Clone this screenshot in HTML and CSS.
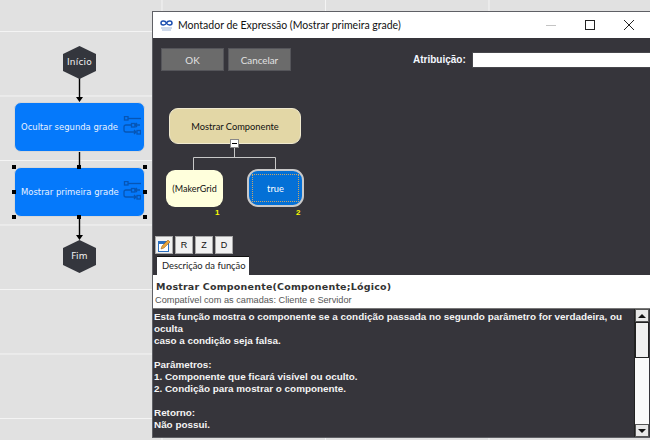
FILE: index.html
```html
<!DOCTYPE html>
<html lang="pt">
<head>
<meta charset="utf-8">
<title>Montador de Expressão</title>
<link rel="stylesheet" href="styles.css">
</head>
<body>
<main class="canvas">
  <svg class="links" width="152" height="440" viewBox="0 0 152 440">
    <path d="M79.500 78V100M79.500 152V166M79.500 216V238" stroke="#000" stroke-width="1.400" fill="none"/>
    <path d="M76 97h7l-3.500 5zM76 235h7l-3.500 5z" fill="#000"/>
  </svg>
  <div class="hex hex-start">Início</div>
  <div class="task task-hide">Ocultar segunda grade
    <svg class="task-icon" width="18" height="22" viewBox="0 0 18 22"><use href="#flow"/></svg>
  </div>
  <div class="task task-show">Mostrar primeira grade
    <svg class="task-icon" width="18" height="22" viewBox="0 0 18 22"><use href="#flow"/></svg>
    <i class="grip g1"></i><i class="grip g2"></i><i class="grip g3"></i><i class="grip g4"></i><i class="grip g5"></i><i class="grip g6"></i><i class="grip g7"></i><i class="grip g8"></i>
  </div>
  <div class="hex hex-end">Fim</div>
  <svg width="0" height="0" class="defs"><defs>
    <g id="flow" fill="none" stroke="#0655b5" stroke-width="1.300">
      <rect x="1.500" y="0.500" width="3.500" height="3.500"/><path d="M5 2.500H18"/>
      <rect x="8.500" y="7.500" width="3.500" height="3.500"/><path d="M8 9H3Q1 9 1 11V14Q1 16 3 16H13M12 9H17M14 7l-2 2 2 2M11 14l2 2-2 2"/>
      <rect x="14" y="14.500" width="3.500" height="3.500"/>
    </g>
  </defs></svg>

  <section class="window">
    <header class="titlebar">
      <svg class="app-icon" width="13" height="13" viewBox="0 0 13 13">
        <path d="M6.500 4C5 1 1 1.500 1 4s4 3 5.500 0C8 1 12 1.500 12 4s-4 3-5.500 0" fill="none" stroke="#1c4fb0" stroke-width="1.500"/>
        <path d="M1 9h11M2 11h9" stroke="#9db4d8" stroke-width="1"/>
      </svg>
      <span class="title">Montador de Expressão (Mostrar primeira grade)</span>
      <span class="winbtn"><svg width="10" height="10" viewBox="0 0 10 10"><path d="M0 5.500H10" stroke="#c4c4c4"/></svg></span>
      <span class="winbtn"><svg width="10" height="10" viewBox="0 0 10 10"><rect x="0.500" y="0.500" width="9" height="9" fill="none" stroke="#222"/></svg></span>
      <span class="winbtn"><svg width="10" height="10" viewBox="0 0 10 10"><path d="M0 0L10 10M10 0L0 10" stroke="#222"/></svg></span>
    </header>
    <div class="workspace">
      <div class="actions">
        <button class="btn">OK</button>
        <button class="btn">Cancelar</button>
        <label class="assign">Atribuição:</label>
        <span class="assign-input"></span>
      </div>
      <div class="tree">
        <svg class="tree-lines" width="170" height="40" viewBox="0 0 170 40">
          <path d="M81.500 0V10M40.500 23V10.500H122.500V23" fill="none" stroke="#c8c8c8"/>
        </svg>
        <div class="node node-root">Mostrar Componente</div>
        <span class="collapse"></span>
        <div class="node node-arg">(MakerGrid</div>
        <div class="node node-bool"><span class="focus">true</span></div>
        <b class="idx idx1">1</b>
        <b class="idx idx2">2</b>
      </div>
      <div class="toolbar">
        <span class="tool tool-icon"><svg width="13" height="13" viewBox="0 0 13 13"><rect x="0.500" y="2.500" width="10" height="10" fill="#fff" stroke="#2a6fc0"/><path d="M0 3h11v2H0z" fill="#2a6fc0"/><path d="M3 10l1-3 6-6 2 2-6 6z" fill="#e8a33a" stroke="#8a5a14" stroke-width=".5"/></svg></span>
        <span class="tool">R</span>
        <span class="tool">Z</span>
        <span class="tool">D</span>
      </div>
      <div class="tabs"><span class="tab">Descrição da função</span></div>
    </div>
    <div class="info">
      <h1 class="sig">Mostrar Componente(Componente;Lógico)</h1>
      <p class="compat">Compatível com as camadas: Cliente e Servidor</p>
    </div>
    <div class="desc">
      <div class="desc-text">Esta função mostra o componente se a condição passada no segundo parâmetro for verdadeira, ou oculta
caso a condição seja falsa.

Parâmetros:
1. Componente que ficará visível ou oculto.
2. Condição para mostrar o componente.

Retorno:
Não possui.</div>
      <div class="scrollbar">
        <span class="sb-btn"><i class="arrow-up"></i></span>
        <span class="sb-thumb"></span>
        <span class="sb-track"></span>
        <span class="sb-btn"><i class="arrow-down"></i></span>
      </div>
    </div>
  </section>
</main>
</body>
</html>
```
FILE: styles.css
```css
* { box-sizing: border-box; }
html, body { margin: 0; padding: 0; overflow: hidden; }
body { width: 650px; height: 440px; font-family: "Liberation Sans", Arial, sans-serif; }

.canvas {
  position: relative;
  width: 650px;
  height: 440px;
  overflow: hidden;
  background-color: #e1e1e1;
  background-image:
    linear-gradient(#f4f4f4 1px, transparent 1px),
    linear-gradient(90deg, #f4f4f4 1px, transparent 1px);
  background-size: 163.500px 64.500px;
  background-position: -2px 31px;
}
.links { position: absolute; left: 0; top: 0; }
.defs { position: absolute; }

.hex {
  position: absolute;
  left: 63px;
  width: 33px;
  height: 33px;
  clip-path: polygon(50% 0, 100% 24%, 100% 76%, 50% 100%, 0 76%, 0 24%);
  background: #34363d;
  color: #f2f2f2;
  font: 9px/33px "DejaVu Sans", sans-serif;
  letter-spacing: .2px;
  text-align: center;
}
.hex-start { top: 46px; }
.hex-end { top: 240px; }

.task {
  position: absolute;
  left: 14px;
  width: 131px;
  height: 50px;
  padding-left: 6px;
  border: 1px solid #d8d8d8;
  border-radius: 7px;
  background: #0579fb;
  color: #e9f2ff;
  font: 8.450px/48px "DejaVu Sans", sans-serif;
  white-space: nowrap;
}
.task-hide { top: 102px; }
.task-show { top: 167px; }
.task-icon { position: absolute; right: 3px; top: 13px; }

.grip { position: absolute; width: 4px; height: 4px; background: #000; }
.g1 { left: -3px; top: -3px; }
.g2 { left: 62px; top: -3px; }
.g3 { right: -3px; top: -3px; }
.g4 { left: -3px; top: 22px; }
.g5 { right: -3px; top: 22px; }
.g6 { left: -3px; bottom: -3px; }
.g7 { left: 62px; bottom: -3px; }
.g8 { right: -3px; bottom: -3px; }

.window {
  position: absolute;
  left: 152px;
  top: 11px;
  width: 498px;
  height: 427px;
  display: flex;
  flex-direction: column;
  border: 1px solid #5f6065;
  border-right: 0;
  background: #36353b;
}
.titlebar {
  flex: none;
  height: 26px;
  display: flex;
  align-items: center;
  padding: 0 2px 0 7px;
  background: #fff;
  color: #111;
}
.app-icon { flex: none; margin-right: 5px; }
.title { flex: 1; white-space: nowrap; font: 10.500px Lato, sans-serif; }
.winbtn { flex: none; width: 39px; display: flex; justify-content: center; }

.workspace { flex: none; height: 237px; display: flex; flex-direction: column; }
.actions { display: flex; align-items: center; height: 23px; margin-top: 10px; padding-left: 8px; }
.btn {
  width: 63px;
  height: 23px;
  margin-right: 4px;
  padding: 0;
  border: 1px solid #55555a;
  border-radius: 0;
  background: #6b6b6b;
  color: #e2e2e2;
  font: 9.800px Lato, sans-serif;
}
.assign { margin-left: 118px; width: 59px; color: #f4f8ff; font: bold 10px "Liberation Sans", sans-serif; white-space: nowrap; }
.assign-input { flex: 1; height: 16px; background: #fff; border: 1px solid #47474c; border-right: 0; }

.tree { position: relative; flex: 1; }
.tree-lines { position: absolute; left: 0; top: 76px; }
.node {
  position: absolute;
  display: flex;
  align-items: center;
  justify-content: center;
  font: 9.300px Lato, sans-serif;
  color: #111;
  border-radius: 9px;
  white-space: nowrap;
}
.node-root { left: 16px; top: 37px; width: 132px; height: 36px; background: #e3d7a6; border: 1px solid #f0ead0; }
.node-arg { left: 13px; top: 99px; width: 57px; height: 37px; background: #ffffdc; font-size: 9px; }
.node-bool { left: 94px; top: 98px; width: 57px; height: 38px; padding: 3px; background: #0470d6; border: 2px solid #c9c9c9; border-radius: 11px; color: #fff; }
.focus { display: flex; flex: 1; height: 100%; align-items: center; justify-content: center; border: 1px dotted #c9a66a; }
.collapse { position: absolute; left: 77px; top: 68px; width: 9px; height: 9px; background: #fff; border: 1px solid #888; }
.collapse::after { content: ""; position: absolute; left: 1px; top: 3px; width: 5px; height: 1px; background: #000; }
.idx { position: absolute; top: 137px; color: #ff0; font: bold 8px "Liberation Sans", sans-serif; }
.idx1 { left: 62px; }
.idx2 { left: 143px; }

.toolbar { flex: none; display: flex; gap: 2px; height: 18px; padding-left: 2px; }
.tool {
  width: 18px;
  height: 18px;
  display: flex;
  align-items: center;
  justify-content: center;
  background: #f1f1f1;
  border: 1px solid #a8a8a8;
  color: #111;
  font: 9px "Liberation Sans", sans-serif;
}
.tabs { flex: none; height: 19px; margin-top: 2px; padding-left: 4px; }
.tab {
  display: block;
  width: 92px;
  height: 19px;
  padding-left: 5px;
  background: #fff;
  border-top: 1px solid #111;
  color: #222;
  font: 9.400px/18px Lato, sans-serif;
  white-space: nowrap;
}

.info { flex: none; height: 33px; background: #fff; padding: 5px 2px 0 3px; }
.sig { margin: 0; color: #333; font: bold 9.500px/13px "DejaVu Sans", sans-serif; letter-spacing: .2px; white-space: nowrap; }
.compat { margin: 1px 0 0 -1px; color: #555; font: 9.200px/12px "Liberation Sans", sans-serif; white-space: nowrap; }

.desc { flex: 1; min-height: 0; display: flex; border-top: 1px solid #777; }
.desc-text { flex: 1; padding: 2px 0 0 1px; color: #f4f4f4; font: bold 9.900px/12px "Liberation Sans", sans-serif; white-space: pre-line; }
.scrollbar { flex: none; width: 15px; margin-right: 1px; display: flex; flex-direction: column; background: #f2f2f2; border-left: 1px solid #222; }
.sb-btn { flex: none; height: 13px; display: flex; align-items: center; justify-content: center; background: #e8e8e8; border: 1px solid #555; }
.sb-thumb { flex: none; height: 36px; background: #f0f0f0; border: 1px solid #222; }
.sb-track { flex: 1; background: #fafafa; }
.arrow-up { border: 4px solid transparent; border-top: 0; border-bottom: 4px solid #111; }
.arrow-down { border: 4px solid transparent; border-bottom: 0; border-top: 4px solid #111; }
```
